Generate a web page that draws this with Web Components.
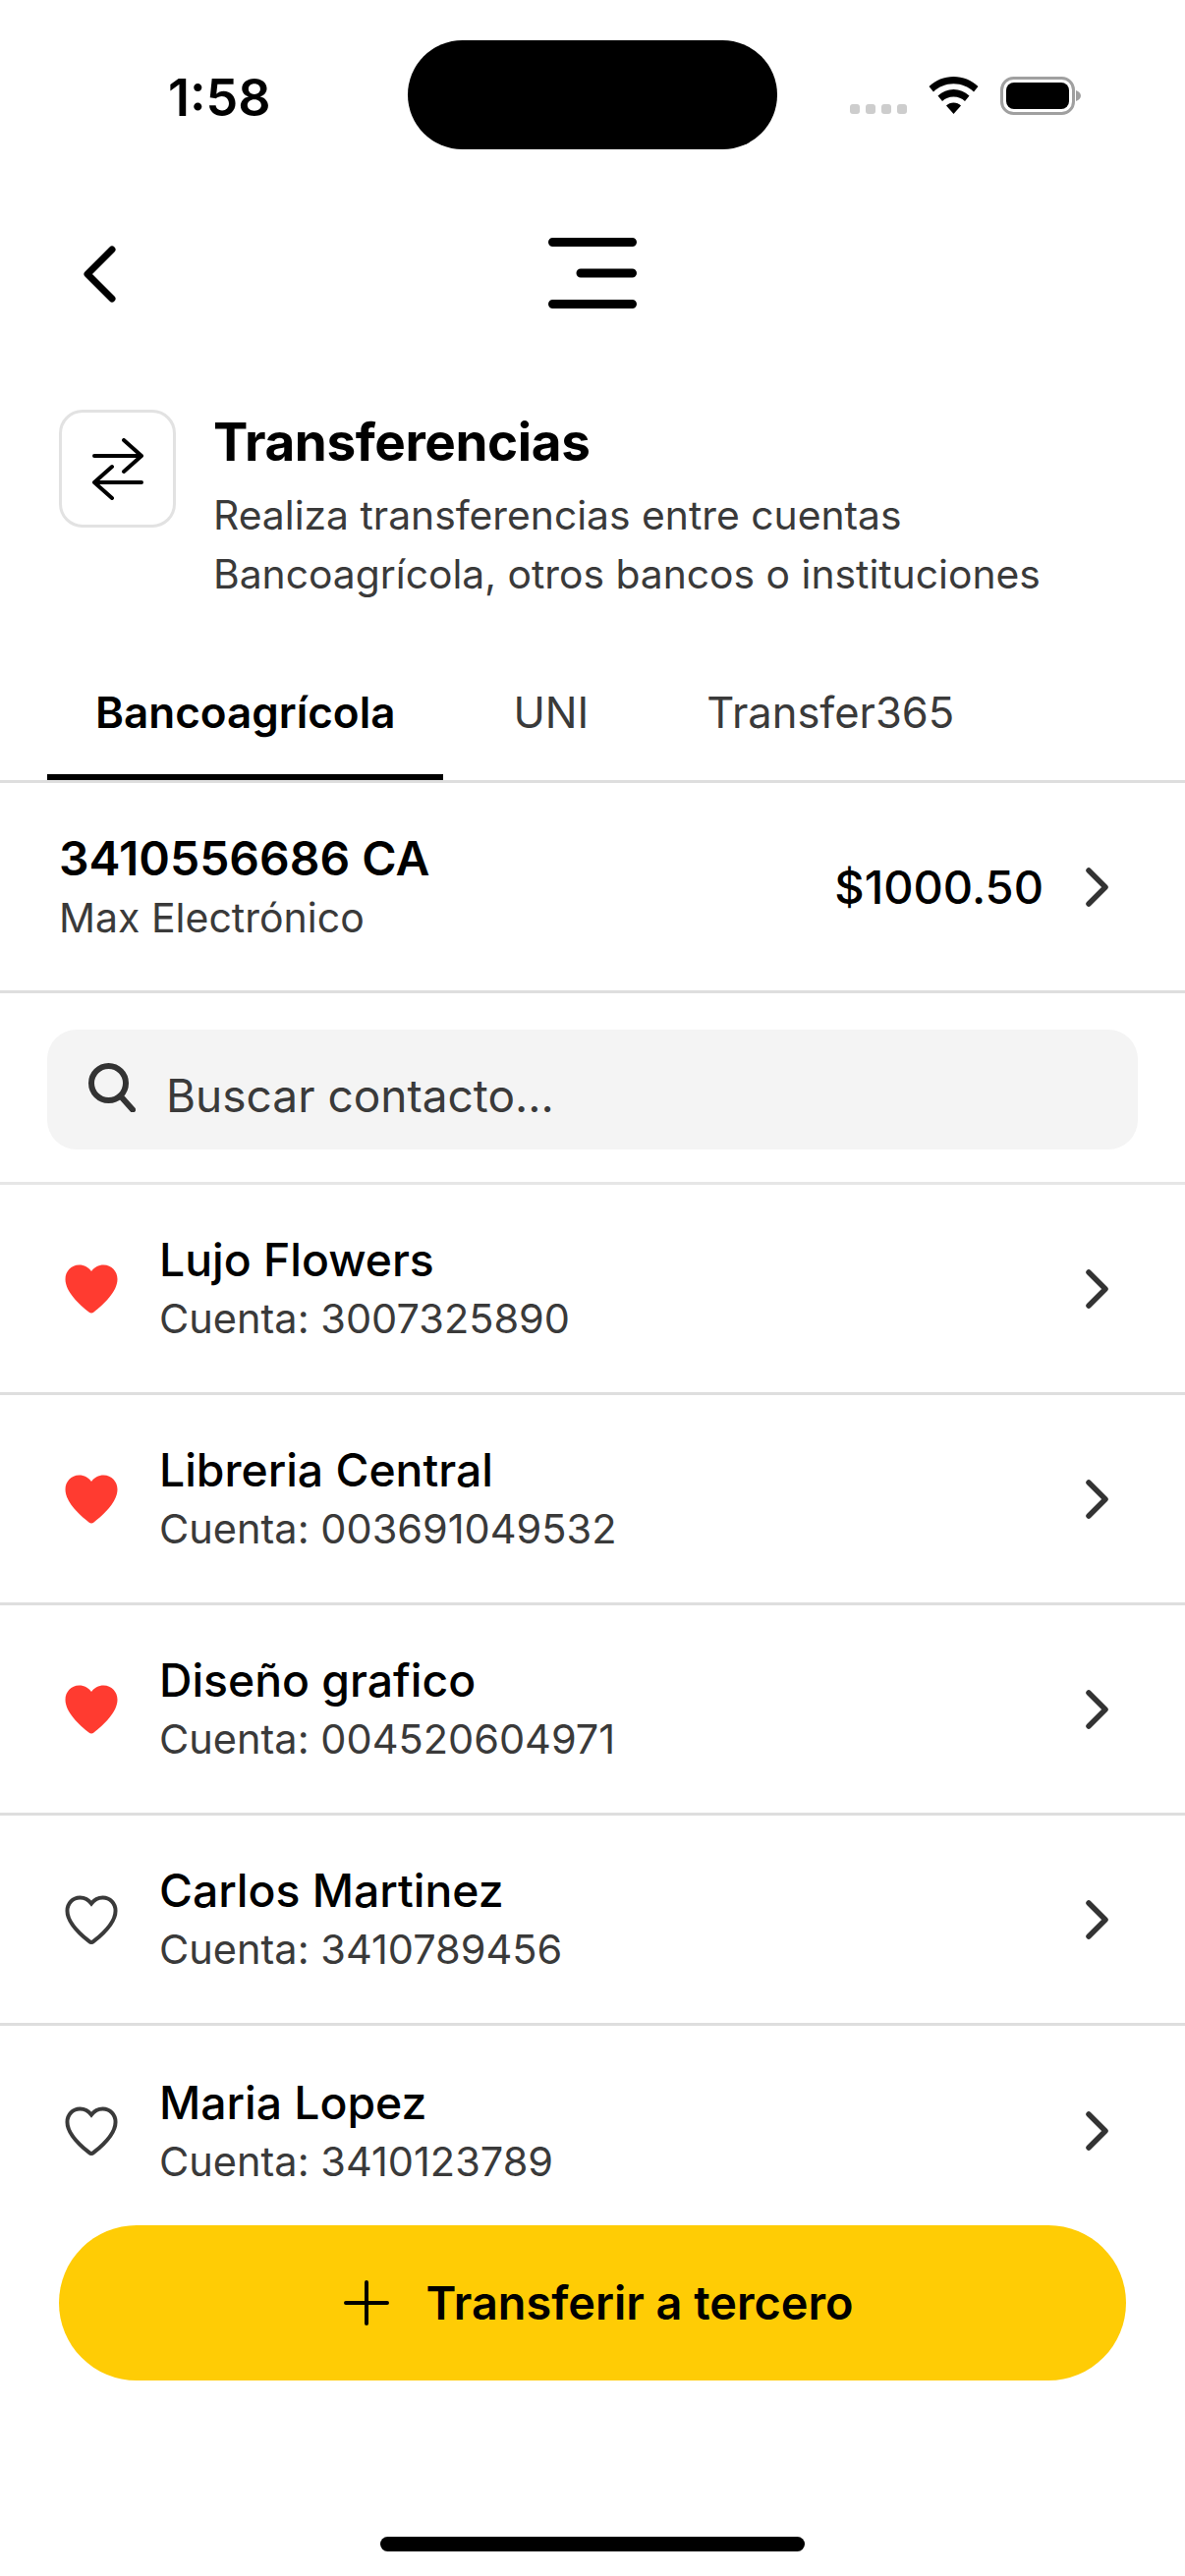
<!DOCTYPE html>
<html lang="es">
<head>
<meta charset="utf-8">
<title>Transferencias</title>
<style>
html, body { margin: 0; padding: 0; background: #fff; }
body { font-family: Inter, "Noto Sans", sans-serif; color: #000; }
</style>
</head>
<body>
<app-screen>
  <status-bar time="1:58"></status-bar>
  <nav-bar></nav-bar>
  <page-header heading="Transferencias">Realiza transferencias entre cuentas<br>Bancoagrícola, otros bancos o instituciones</page-header>
  <tab-bar>
    <tab-item active>Bancoagrícola</tab-item>
    <tab-item>UNI</tab-item>
    <tab-item>Transfer365</tab-item>
  </tab-bar>
  <account-row number="3410556686 CA" kind="Max Electrónico" amount="$1000.50"></account-row>
  <search-box placeholder="Buscar contacto..."></search-box>
  <contact-list>
    <contact-row name="Lujo Flowers" account="3007325890" favorite></contact-row>
    <contact-row name="Libreria Central" account="003691049532" favorite></contact-row>
    <contact-row name="Diseño grafico" account="004520604971" favorite></contact-row>
    <contact-row name="Carlos Martinez" account="3410789456"></contact-row>
    <contact-row name="Maria Lopez" account="3410123789"></contact-row>
  </contact-list>
  <action-button>Transferir a tercero</action-button>
  <home-indicator></home-indicator>
</app-screen>

<script>
const chevron = `<svg width="28" height="40" viewBox="0 0 28 40" fill="none" stroke="#333" stroke-width="5.500" stroke-linecap="round" stroke-linejoin="round"><path d="M5 3 L22 20 L5 37"/></svg>`

const heartPath = "M27 7C24 3 20 .5 14.500 .5C6.500 .5 .5 7 .5 15C.5 28 15 41 24.500 48.500C26 49.800 28 49.800 29.500 48.500C39 41 53.500 28 53.500 15C53.500 7 47.500 .5 39.500 .5C34 .5 30 3 27 7Z"

class AppScreen extends HTMLElement {
    constructor() {
        super();
        const shadow = this.attachShadow({ mode: "open" });
        shadow.innerHTML = `
        <style>
        :host { display: flex; flex-direction: column; width: 1206px; height: 2622px; overflow: hidden; background: #fff; }
        ::slotted(*) { flex: none; }
        </style>
        <slot></slot>`
    }
}

class StatusBar extends HTMLElement {
    constructor() {
        super();
        const shadow = this.attachShadow({ mode: "open" });
        shadow.innerHTML = `
        <style>
        :host { display: flex; align-items: flex-start; height: 192px; box-sizing: border-box; padding-top: 41px; }
        .time { width: 415px; height: 111px; box-sizing: border-box; padding-left: 171px; font-size: 52px; font-weight: 600; line-height: 117px; }
        .island { width: 376px; height: 111px; border-radius: 56px; background: #000; }
        .icons { display: flex; align-items: flex-start; padding-top: 37px; }
        .dots { display: flex; gap: 6px; margin: 28px 22px 0 74px; }
        .dots i { width: 10px; height: 10px; border-radius: 3px; background: #cdcdcd; }
        .wifi { margin-right: 22px; }
        </style>
        <div class="time">${this.getAttribute("time")}</div>
        <div class="island"></div>
        <div class="icons">
            <div class="dots"><i></i><i></i><i></i><i></i></div>
            <svg class="wifi" width="51" height="38" viewBox="0 0 51 38"><path d="M25.5 0C16 0 7.4 3.5 0.5 10L5 15.5C10.500 10.300 17.500 7.300 25.500 7.300S40.500 10.300 46 15.500L50.500 10C43.600 3.500 35 0 25.500 0Z"/><path d="M25.500 13C19.500 13 14 15.300 9.500 19.500L14 25C17 22 21 20.400 25.500 20.400S34 22 37 25L41.500 19.500C37 15.300 31.500 13 25.500 13Z"/><path d="M25.500 26.500C22.500 26.500 20 27.500 18 29.500L25.500 38L33 29.500C31 27.500 28.500 26.500 25.500 26.500Z"/></svg>
            <svg width="82" height="40" viewBox="0 0 82 40"><rect x="1.500" y="1.500" width="73" height="36" rx="12" fill="none" stroke="#a0a0a0" stroke-width="3"/><rect x="6" y="6" width="64" height="27" rx="8"/><path d="M77 14C80 15 82 17 82 19.500S80 24 77 25Z" fill="#a0a0a0"/></svg>
        </div>`
    }
}

class NavBar extends HTMLElement {
    constructor() {
        super();
        const shadow = this.attachShadow({ mode: "open" });
        shadow.innerHTML = `
        <style>
        :host { display: flex; align-items: center; height: 170px; padding-top: 2px; box-sizing: border-box; }
        .back { margin: 2px 0 0 82px; }
        .menu { margin-left: 438px; }
        </style>
        <svg class="back" width="38" height="60" viewBox="0 0 38 60" fill="none" stroke="#000" stroke-width="7" stroke-linecap="round" stroke-linejoin="round"><path d="M32 5 L7 30 L32 55"/></svg>
        <svg class="menu" width="90" height="72" viewBox="0 0 90 72" fill="none" stroke="#000" stroke-width="9" stroke-linecap="round"><path d="M4.500 4.500H85.500M33 36H85.500M4.500 67.500H85.500"/></svg>`
    }
}

class PageHeader extends HTMLElement {
    constructor() {
        super();
        const shadow = this.attachShadow({ mode: "open" });
        shadow.innerHTML = `
        <style>
        :host { display: flex; height: 330px; box-sizing: border-box; padding: 55px 40px 0 60px; gap: 38px; }
        .icon { width: 119px; height: 120px; box-sizing: border-box; border: 3px solid #e2e2e2; border-radius: 24px; display: flex; align-items: center; justify-content: center; flex: none; }
        h1 { margin: 3px 0 0; font-size: 53px; font-weight: 700; line-height: 60px; letter-spacing: -0.4px; }
        p { margin: 15px 0 0; font-size: 40.800px; line-height: 59.500px; color: #3a3a3a; }
        </style>
        <div class="icon">
            <svg width="52" height="63" viewBox="0 0 52 63" fill="none" stroke="#000" stroke-width="4" stroke-linecap="round" stroke-linejoin="round"><path d="M2 18H50M32 2L50 18L32 34M50 45H2M20 29L2 45L20 61"/></svg>
        </div>
        <div>
            <h1>${this.getAttribute("heading")}</h1>
            <p><slot></slot></p>
        </div>`
    }
}

class TabBar extends HTMLElement {
    constructor() {
        super();
        const shadow = this.attachShadow({ mode: "open" });
        shadow.innerHTML = `
        <style>
        :host { display: flex; gap: 22px; height: 105px; box-sizing: border-box; padding-left: 48px; border-bottom: 3px solid #dedede; }
        </style>
        <slot></slot>`
    }
}

class TabItem extends HTMLElement {
    constructor() {
        super();
        const shadow = this.attachShadow({ mode: "open" });
        shadow.innerHTML = `
        <style>
        :host { display: block; height: 102px; box-sizing: border-box; padding: 0 49px; font-size: 43.500px; line-height: 66px; color: #3a3a3a; }
        :host([active]) { font-size: 44px; font-weight: 600; color: #000; border-bottom: 6px solid #000; }
        </style>
        <slot></slot>`
    }
}

class AccountRow extends HTMLElement {
    constructor() {
        super();
        const shadow = this.attachShadow({ mode: "open" });
        shadow.innerHTML = `
        <style>
        :host { display: flex; align-items: center; height: 214px; box-sizing: border-box; padding: 0 75px 0 60px; border-bottom: 3px solid #dedede; }
        .info { flex: 1; padding-top: 1px; }
        .number { font-size: 48px; font-weight: 600; line-height: 60px; }
        .kind { font-size: 41px; line-height: 56px; color: #3a3a3a; margin-top: 2px; }
        .amount { font-size: 47px; font-weight: 500; margin-right: 41px; }
        </style>
        <div class="info">
            <div class="number">${this.getAttribute("number")}</div>
            <div class="kind">${this.getAttribute("kind")}</div>
        </div>
        <div class="amount">${this.getAttribute("amount")}</div>
        ${chevron}`
    }
}

class SearchBox extends HTMLElement {
    constructor() {
        super();
        const shadow = this.attachShadow({ mode: "open" });
        shadow.innerHTML = `
        <style>
        :host { display: block; height: 195px; box-sizing: border-box; padding: 37px 48px 0; border-bottom: 3px solid #e6e6e6; }
        .field { display: flex; align-items: center; height: 122px; padding-left: 42px; gap: 31px; border-radius: 30px; background: #f4f4f4; font-size: 46px; color: #3a3a3a; }
        span { padding-top: 12px; }
        svg { margin-top: -4px; }
        </style>
        <div class="field">
            <svg width="48" height="50" viewBox="0 0 48 50" fill="none" stroke="#333" stroke-width="6" stroke-linecap="round"><circle cx="20.500" cy="20.500" r="17.500"/><path d="M32.500 33.500L45 47.500"/></svg>
            <span>${this.getAttribute("placeholder")}</span>
        </div>`
    }
}

class ContactList extends HTMLElement {
    constructor() {
        super();
        const shadow = this.attachShadow({ mode: "open" });
        shadow.innerHTML = `
        <style>
        :host { display: block; height: 1059px; overflow: hidden; }
        </style>
        <slot></slot>`
    }
}

class ContactRow extends HTMLElement {
    constructor() {
        super();
        const shadow = this.attachShadow({ mode: "open" });
        const heart = this.hasAttribute("favorite")
            ? `<path d="${heartPath}" fill="#ff3b30"/>`
            : `<path d="${heartPath}" fill="none" stroke="#3a3a3a" stroke-width="4.300" transform="translate(2 2) scale(.926)"/>`
        shadow.innerHTML = `
        <style>
        :host { display: flex; flex: none; align-items: center; height: 214px; box-sizing: border-box; padding: 0 75px 0 66px; border-bottom: 3px solid #dedede; }
        :host(:last-child) { border-bottom: none; }
        .heart { margin-right: 42px; flex: none; }
        .info { flex: 1; }
        .name { font-size: 46.300px; font-weight: 500; line-height: 58px; color: #000; }
        .account { font-size: 41.500px; line-height: 56px; color: #3a3a3a; margin-top: 3px; }
        </style>
        <svg class="heart" width="54" height="50" viewBox="0 0 54 50">${heart}</svg>
        <div class="info">
            <div class="name">${this.getAttribute("name")}</div>
            <div class="account">Cuenta: ${this.getAttribute("account")}</div>
        </div>
        ${chevron}`
    }
}

class ActionButton extends HTMLElement {
    constructor() {
        super();
        const shadow = this.attachShadow({ mode: "open" });
        shadow.innerHTML = `
        <style>
        :host { display: flex; align-items: center; justify-content: center; gap: 38px; width: 1086px; height: 158px; box-sizing: border-box; padding-left: 12px; margin-left: 60px; border-radius: 79px; background: #ffcc05; font-size: 46.800px; font-weight: 600; color: #000; }
        </style>
        <svg width="46" height="46" viewBox="0 0 46 46" fill="none" stroke="#000" stroke-width="4" stroke-linecap="round"><path d="M23 2V44M2 23H44"/></svg>
        <span><slot></slot></span>`
    }
}

class HomeIndicator extends HTMLElement {
    constructor() {
        super();
        const shadow = this.attachShadow({ mode: "open" });
        shadow.innerHTML = `
        <style>
        :host { display: block; width: 432px; height: 15px; margin: 159px 0 0 387px; border-radius: 8px; background: #000; }
        </style>`
    }
}

customElements.define("app-screen", AppScreen);
customElements.define("status-bar", StatusBar);
customElements.define("nav-bar", NavBar);
customElements.define("page-header", PageHeader);
customElements.define("tab-bar", TabBar);
customElements.define("tab-item", TabItem);
customElements.define("account-row", AccountRow);
customElements.define("search-box", SearchBox);
customElements.define("contact-list", ContactList);
customElements.define("contact-row", ContactRow);
customElements.define("action-button", ActionButton);
customElements.define("home-indicator", HomeIndicator);
</script>
</body>
</html>
